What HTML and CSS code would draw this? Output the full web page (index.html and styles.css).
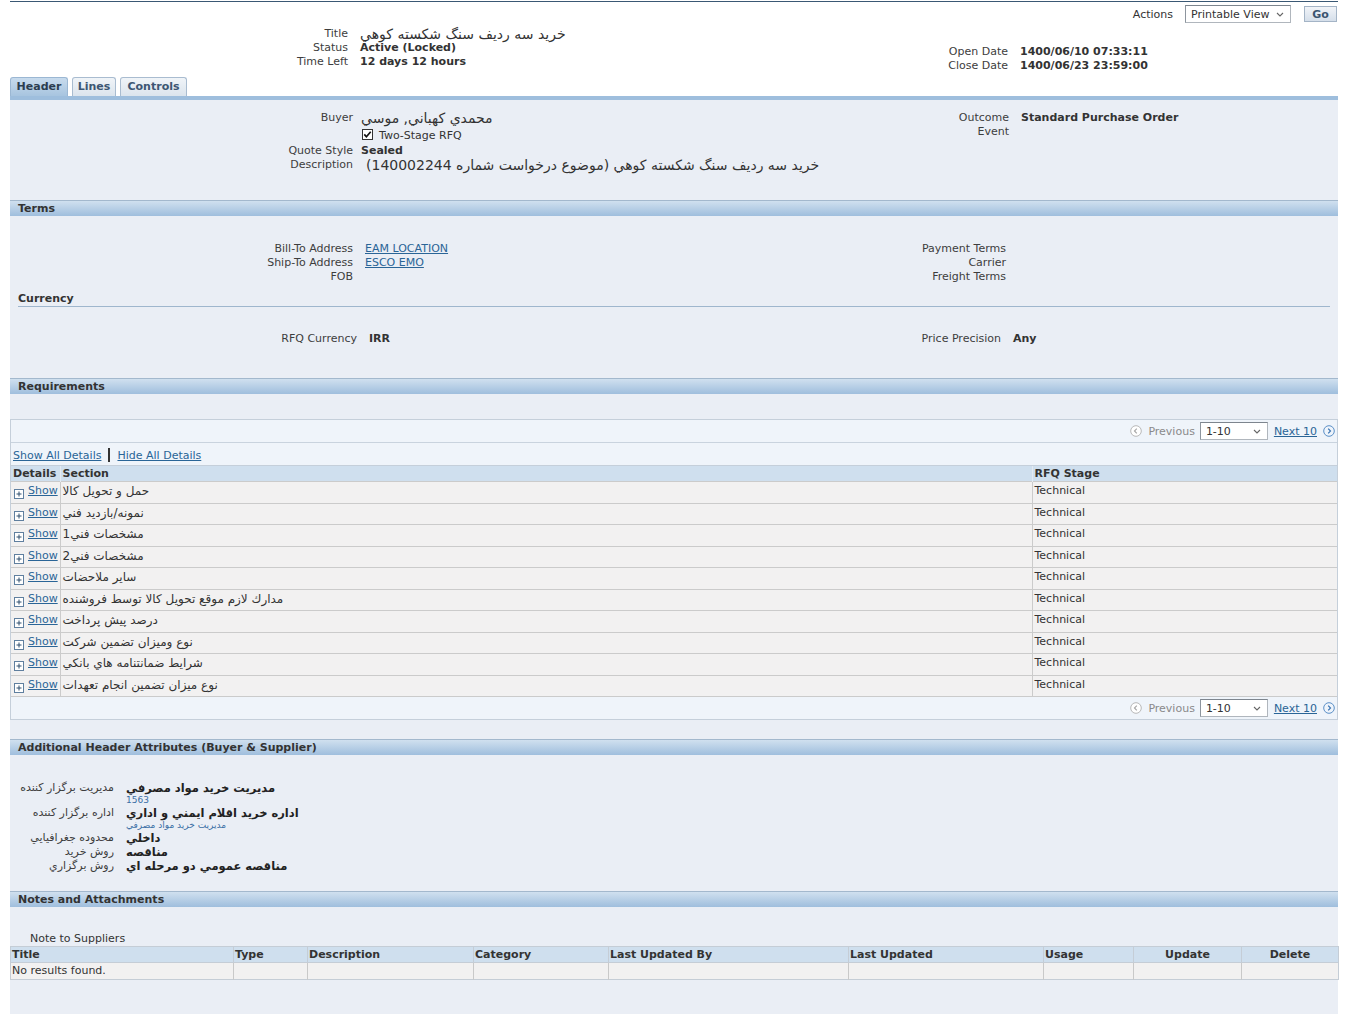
FILE: index.html
```html
<!DOCTYPE html>
<html>
<head>
<meta charset="utf-8">
<title>RFQ</title>
<link rel="stylesheet" href="styles.css">
</head>
<body>
<div class="page">
  <div class="actions">
    <span class="lbl">Actions</span>
    <span class="select act-select">Printable View<svg class="chev" width="8" height="5" viewBox="0 0 8 5"><path d="M1 1 L4 4 L7 1" fill="none" stroke="#666" stroke-width="1.1"/></svg></span>
    <span class="gobtn">Go</span>
  </div>

  <div class="summary">
    <div class="kv kv-title">
      <span class="k">Title</span><span class="v fa">خريد سه رديف سنگ شكسته كوهي</span>
      <span class="k">Status</span><span class="v b">Active (Locked)</span>
      <span class="k">Time Left</span><span class="v b">12 days 12 hours</span>
    </div>
    <div class="kv kv-dates">
      <span class="k">Open Date</span><span class="v b">1400/06/10 07:33:11</span>
      <span class="k">Close Date</span><span class="v b">1400/06/23 23:59:00</span>
    </div>
  </div>

  <div class="tabs">
    <span class="tab active tab-header">Header</span>
    <span class="tab tab-lines">Lines</span>
    <span class="tab tab-controls">Controls</span>
  </div>
  <div class="tabbar"></div>

  <div class="panel">
    <div class="sect sect-header">
      <div class="kv kv-h1">
        <span class="k">Buyer</span><span class="v fa">محمدي كهباني, موسي</span>
        <span class="k cbrow"></span><span class="v cbrow"><svg class="cb" width="11" height="11" viewBox="0 0 11 11"><rect x="0.5" y="0.5" width="10" height="10" fill="#fff" stroke="#333"/><path d="M2.3 5.4 L4.4 7.8 L8.7 2.8" fill="none" stroke="#111" stroke-width="1.7"/></svg>Two-Stage RFQ</span>
        <span class="k">Quote Style</span><span class="v b">Sealed</span>
        <span class="k">Description</span><span class="v fa desc"><span class="rtl" dir="rtl">خريد سه رديف سنگ شكسته كوهي (موضوع درخواست شماره 140002244)</span></span>
      </div>
      <div class="kv kv-h2">
        <span class="k">Outcome</span><span class="v b">Standard Purchase Order</span>
        <span class="k">Event</span><span class="v"></span>
      </div>
    </div>

    <div class="sechead">Terms</div>
    <div class="sect sect-terms">
      <div class="kv kv-t1">
        <span class="k">Bill-To Address</span><span class="v"><a href="#">EAM LOCATION</a></span>
        <span class="k">Ship-To Address</span><span class="v"><a href="#">ESCO EMO</a></span>
        <span class="k">FOB</span><span class="v"></span>
      </div>
      <div class="kv kv-t2">
        <span class="k">Payment Terms</span><span class="v"></span>
        <span class="k">Carrier</span><span class="v"></span>
        <span class="k">Freight Terms</span><span class="v"></span>
      </div>
    </div>
    <div class="subhead">Currency</div>
    <div class="sect sect-cur">
      <div class="kv kv-c1">
        <span class="k">RFQ Currency</span><span class="v b">IRR</span>
      </div>
      <div class="kv kv-c2">
        <span class="k">Price Precision</span><span class="v b">Any</span>
      </div>
    </div>

    <div class="sechead">Requirements</div>
    <div class="reqwrap">
      <div class="navrow">
        <svg class="navicon" width="12" height="12" viewBox="0 0 12 12"><circle cx="6" cy="6" r="5.3" fill="#fff" stroke="#b8b8b8"/><path d="M6.8 3.6 L4.5 6 L6.8 8.4" fill="none" stroke="#a8a8a8" stroke-width="1.2"/></svg>
        <span class="prev">Previous</span>
        <span class="select nav-select">1-10<svg class="chev" width="8" height="5" viewBox="0 0 8 5"><path d="M1 1 L4 4 L7 1" fill="none" stroke="#666" stroke-width="1.1"/></svg></span>
        <a href="#" class="next">Next 10</a>
        <svg class="navicon" width="12" height="12" viewBox="0 0 12 12"><circle cx="6" cy="6" r="5.3" fill="#eef4fb" stroke="#5b8fc6"/><path d="M5.2 3.6 L7.5 6 L5.2 8.4" fill="none" stroke="#3a74b3" stroke-width="1.2"/></svg>
      </div>
      <div class="showall"><a href="#">Show All Details</a><span class="sep"></span><a href="#">Hide All Details</a></div>
      <table class="reqtable">
        <colgroup><col class="c-det"><col class="c-sec"><col class="c-stage"></colgroup>
        <thead><tr><th>Details</th><th>Section</th><th>RFQ Stage</th></tr></thead>
        <tbody>
          <tr><td class="det"><svg class="plus" width="10" height="10" viewBox="0 0 10 10"><rect x="0.5" y="0.5" width="9" height="9" fill="#fff" stroke="#5f7f9f"/><path d="M2.5 5 H7.5 M5 2.5 V7.5" stroke="#2f4f6f" stroke-width="1"/></svg><a href="#">Show</a></td><td class="fa-r">حمل و تحويل كالا</td><td>Technical</td></tr>
          <tr><td class="det"><svg class="plus" width="10" height="10" viewBox="0 0 10 10"><rect x="0.5" y="0.5" width="9" height="9" fill="#fff" stroke="#5f7f9f"/><path d="M2.5 5 H7.5 M5 2.5 V7.5" stroke="#2f4f6f" stroke-width="1"/></svg><a href="#">Show</a></td><td class="fa-r">نمونه/بازديد فني</td><td>Technical</td></tr>
          <tr><td class="det"><svg class="plus" width="10" height="10" viewBox="0 0 10 10"><rect x="0.5" y="0.5" width="9" height="9" fill="#fff" stroke="#5f7f9f"/><path d="M2.5 5 H7.5 M5 2.5 V7.5" stroke="#2f4f6f" stroke-width="1"/></svg><a href="#">Show</a></td><td class="fa-r">مشخصات فني1</td><td>Technical</td></tr>
          <tr><td class="det"><svg class="plus" width="10" height="10" viewBox="0 0 10 10"><rect x="0.5" y="0.5" width="9" height="9" fill="#fff" stroke="#5f7f9f"/><path d="M2.5 5 H7.5 M5 2.5 V7.5" stroke="#2f4f6f" stroke-width="1"/></svg><a href="#">Show</a></td><td class="fa-r">مشخصات فني2</td><td>Technical</td></tr>
          <tr><td class="det"><svg class="plus" width="10" height="10" viewBox="0 0 10 10"><rect x="0.5" y="0.5" width="9" height="9" fill="#fff" stroke="#5f7f9f"/><path d="M2.5 5 H7.5 M5 2.5 V7.5" stroke="#2f4f6f" stroke-width="1"/></svg><a href="#">Show</a></td><td class="fa-r">ساير ملاحضات</td><td>Technical</td></tr>
          <tr><td class="det"><svg class="plus" width="10" height="10" viewBox="0 0 10 10"><rect x="0.5" y="0.5" width="9" height="9" fill="#fff" stroke="#5f7f9f"/><path d="M2.5 5 H7.5 M5 2.5 V7.5" stroke="#2f4f6f" stroke-width="1"/></svg><a href="#">Show</a></td><td class="fa-r">مدارك لازم موقع تحويل كالا توسط فروشنده</td><td>Technical</td></tr>
          <tr><td class="det"><svg class="plus" width="10" height="10" viewBox="0 0 10 10"><rect x="0.5" y="0.5" width="9" height="9" fill="#fff" stroke="#5f7f9f"/><path d="M2.5 5 H7.5 M5 2.5 V7.5" stroke="#2f4f6f" stroke-width="1"/></svg><a href="#">Show</a></td><td class="fa-r">درصد پيش پرداخت</td><td>Technical</td></tr>
          <tr><td class="det"><svg class="plus" width="10" height="10" viewBox="0 0 10 10"><rect x="0.5" y="0.5" width="9" height="9" fill="#fff" stroke="#5f7f9f"/><path d="M2.5 5 H7.5 M5 2.5 V7.5" stroke="#2f4f6f" stroke-width="1"/></svg><a href="#">Show</a></td><td class="fa-r">نوع وميزان تضمين شركت</td><td>Technical</td></tr>
          <tr><td class="det"><svg class="plus" width="10" height="10" viewBox="0 0 10 10"><rect x="0.5" y="0.5" width="9" height="9" fill="#fff" stroke="#5f7f9f"/><path d="M2.5 5 H7.5 M5 2.5 V7.5" stroke="#2f4f6f" stroke-width="1"/></svg><a href="#">Show</a></td><td class="fa-r">شرايط ضمانتنامه هاي بانكي</td><td>Technical</td></tr>
          <tr><td class="det"><svg class="plus" width="10" height="10" viewBox="0 0 10 10"><rect x="0.5" y="0.5" width="9" height="9" fill="#fff" stroke="#5f7f9f"/><path d="M2.5 5 H7.5 M5 2.5 V7.5" stroke="#2f4f6f" stroke-width="1"/></svg><a href="#">Show</a></td><td class="fa-r">نوع ميزان تضمين انجام تعهدات</td><td>Technical</td></tr>
        </tbody>
      </table>
      <div class="navrow navbottom">
        <svg class="navicon" width="12" height="12" viewBox="0 0 12 12"><circle cx="6" cy="6" r="5.3" fill="#fff" stroke="#b8b8b8"/><path d="M6.8 3.6 L4.5 6 L6.8 8.4" fill="none" stroke="#a8a8a8" stroke-width="1.2"/></svg>
        <span class="prev">Previous</span>
        <span class="select nav-select">1-10<svg class="chev" width="8" height="5" viewBox="0 0 8 5"><path d="M1 1 L4 4 L7 1" fill="none" stroke="#666" stroke-width="1.1"/></svg></span>
        <a href="#" class="next">Next 10</a>
        <svg class="navicon" width="12" height="12" viewBox="0 0 12 12"><circle cx="6" cy="6" r="5.3" fill="#eef4fb" stroke="#5b8fc6"/><path d="M5.2 3.6 L7.5 6 L5.2 8.4" fill="none" stroke="#3a74b3" stroke-width="1.2"/></svg>
      </div>
    </div>

    <div class="sechead sechead-add">Additional Header Attributes (Buyer &amp; Supplier)</div>
    <div class="attrs">
      <span class="k">مديريت برگزار كننده</span>
      <span class="v"><span class="fa-b">مديريت خريد مواد مصرفي</span><a href="#" class="sub">1563</a></span>
      <span class="k">اداره برگزار كننده</span>
      <span class="v"><span class="fa-b">اداره خريد اقلام ايمني و اداري</span><a href="#" class="sub">مديريت خريد مواد مصرفي</a></span>
      <span class="k">محدوده جغرافيايي</span>
      <span class="v"><span class="fa-b">داخلي</span></span>
      <span class="k">روش خريد</span>
      <span class="v"><span class="fa-b">مناقصه</span></span>
      <span class="k">روش برگزاري</span>
      <span class="v"><span class="fa-b">مناقصه عمومي دو مرحله اي</span></span>
    </div>

    <div class="sechead sechead-notes">Notes and Attachments</div>
    <div class="notes">
      <div class="notelbl">Note to Suppliers</div>
      <table class="notetable">
        <colgroup>
          <col class="n1"><col class="n2"><col class="n3"><col class="n4"><col class="n5"><col class="n6"><col class="n7"><col class="n8"><col class="n9">
        </colgroup>
        <thead><tr><th>Title</th><th>Type</th><th>Description</th><th>Category</th><th>Last Updated By</th><th>Last Updated</th><th>Usage</th><th class="ctr">Update</th><th class="ctr">Delete</th></tr></thead>
        <tbody><tr><td>No results found.</td><td></td><td></td><td></td><td></td><td></td><td></td><td></td><td></td></tr></tbody>
      </table>
    </div>
  </div>
</div>
</body>
</html>
```
FILE: styles.css
```css
* { box-sizing: border-box; }
html, body { margin: 0; padding: 0; }
body {
  font-family: "DejaVu Sans", Tahoma, Verdana, sans-serif;
  font-size: 11px;
  color: #333;
  background: #fff;
  padding-top: 1px;
}
a { color: #2a6597; text-decoration: underline; }

.page {
  margin: 0 10px;
  border-top: 1px solid #3a5874;
}

/* actions row */
.actions {
  height: 25px;
  display: flex;
  justify-content: flex-end;
  align-items: center;
  padding-right: 1px;
  padding-bottom: 1px;
}
.actions .lbl { margin-right: 12px; color: #333; }
.select {
  display: inline-flex;
  align-items: center;
  justify-content: space-between;
  height: 18px;
  border: 1px solid #b0b6bd;
  border-top-color: #7d858e;
  border-left-color: #8d959e;
  background: #fff;
  padding: 0 6px 0 5px;
  color: #333;
  font-size: 11px;
}
.act-select { width: 106px; }
.chev { display: block; }
.gobtn {
  margin-left: 13px;
  width: 33px;
  height: 16px;
  border: 1px solid #a4b4c6;
  background: linear-gradient(#f1f4f8, #d5dfea);
  font-weight: bold;
  color: #3a5470;
  display: flex;
  align-items: center;
  justify-content: center;
}

/* summary */
.summary {
  display: grid;
  grid-template-columns: minmax(0, 1fr) minmax(0, 1fr);
  margin-bottom: 4px;
}
.kv {
  display: grid;
  grid-template-columns: 338px auto;
  column-gap: 12px;
  line-height: 14px;
  align-content: start;
}
.kv .k { text-align: right; color: #3d3d3d; white-space: nowrap; }
.kv .v { white-space: nowrap; color: #333; }
.b { font-weight: bold; }
.fa { font-size: 14px; }
.kv-dates { grid-template-columns: 334px auto; margin-top: 18px; }

/* tabs */
.tabs {
  display: flex;
  gap: 4px;
  height: 19px;
}
.tab {
  height: 19px;
  border: 1px solid #a9bcd0;
  border-bottom: none;
  border-radius: 3px 3px 0 0;
  background: linear-gradient(#f0f4f8, #dbe4ed);
  font-weight: bold;
  color: #3d5673;
  line-height: 18px;
  text-align: center;
}
.tab.active {
  background: linear-gradient(#c8dbed, #a7c4df);
  border-color: #9bb7d3;
  color: #2c3d50;
}
.tab-header { width: 58px; }
.tab-lines { width: 44px; }
.tab-controls { width: 67px; }
.tabbar { height: 4px; background: #9ebedd; }

/* panel */
.panel {
  background: #eaeef5;
  padding-bottom: 40px;
}
.sect {
  display: grid;
  grid-template-columns: minmax(0, 1fr) minmax(0, 1fr);
}
.sect-header { padding: 11px 0 28px; }
.kv-h1 { grid-template-columns: 343px auto; column-gap: 8px; }
.kv-h2 { grid-template-columns: 335px auto; }
.kv .cbrow { height: 19px; padding-top: 4px; }
.cb { vertical-align: -1px; margin: 0 6px 0 1px; }
.kv .desc { padding-left: 5px; }
.rtl { unicode-bidi: isolate; }

.sechead {
  height: 16px;
  border-top: 1px solid #a3b8cd;
  background: linear-gradient(#d0e0ef, #9fbedd);
  padding-left: 8px;
  font-weight: bold;
  line-height: 15px;
  color: #333;
}

.sect-terms { padding-top: 26px; }
.kv-t1 { grid-template-columns: 343px auto; }
.kv-t2 { grid-template-columns: 332px auto; }
.subhead {
  margin: 8px 8px 0;
  height: 15px;
  line-height: 14px;
  font-weight: bold;
  border-bottom: 1px solid #9fb6cd;
}
.sect-cur { padding: 25px 0 32px; }
.kv-c1 { grid-template-columns: 347px auto; }
.kv-c2 { grid-template-columns: 327px auto; }

/* requirements table */
.reqwrap {
  margin-top: 25px;
  border: 1px solid #c5cfda;
  background: #eff4fa;
}
.navrow {
  height: 23px;
  display: flex;
  justify-content: flex-end;
  align-items: center;
  padding-right: 2px;
  border-bottom: 1px solid #c9d3de;
}
.navbottom { border-bottom: none; height: 22px; }
.navicon { display: block; }
.prev { color: #8a8a8a; margin: 0 5px 0 6px; }
.nav-select { width: 68px; }
.next { margin: 0 6px 0 6px; }
.showall {
  height: 22px;
  display: flex;
  align-items: center;
  padding-left: 2px;
  padding-top: 2px;
}
.showall .sep {
  display: inline-block;
  width: 2px;
  height: 14px;
  background: #333;
  margin: 0 7px 0 7px;
}
.reqtable {
  width: 100%;
  border-collapse: collapse;
  table-layout: fixed;
}
.c-det { width: 49px; }
.c-stage { width: 305px; }
.reqtable th {
  background: #cfdfee;
  text-align: left;
  font-weight: bold;
  height: 16px;
  padding: 0 2px;
  line-height: 15px;
  border-top: 1px solid #c5cfda;
  border-left: 1px solid #e4ebf2;
}
.reqtable th:first-child { border-left: none; }
.reqtable td {
  background: #f2f1f1;
  height: 21.5px;
  vertical-align: top;
  padding: 2px 2px 0;
  line-height: 14px;
  border-top: 1px solid #cbcbcb;
  border-left: 1px solid #cbcbcb;
  white-space: nowrap;
  font-size: 11px;
}
.reqtable td.fa-r { font-size: 12px; }
.reqtable td:first-child { border-left: none; }
.reqtable td.det { padding-left: 3px; }
.reqtable tbody tr:last-child td { border-bottom: 1px solid #cbcbcb; }
.plus { vertical-align: -5px; margin-right: 4px; }

/* additional attrs */
.sechead-add { margin-top: 19px; }
.attrs {
  display: grid;
  grid-template-columns: 104px auto;
  column-gap: 12px;
  padding: 26px 0 18px;
  line-height: 14px;
  align-items: start;
}
.attrs .k { text-align: right; white-space: nowrap; color: #3d3d3d; }
.attrs .v { display: flex; flex-direction: column; align-items: flex-start; }
.fa-b { font-weight: bold; font-size: 11.5px; line-height: 14px; color: #222; }
.sub { font-size: 9px; line-height: 11px; text-decoration: none; color: #3a6ea5; }

/* notes */
.notes { padding-top: 25px; }
.notelbl { padding-left: 20px; line-height: 14px; }
.notetable {
  width: 100%;
  border-collapse: collapse;
  table-layout: fixed;
  border: 1px solid #c5cdd6;
}
.n1 { width: 223px; } .n2 { width: 74px; } .n3 { width: 166px; }
.n4 { width: 135px; } .n5 { width: 240px; } .n6 { width: 195px; }
.n7 { width: 90px; } .n8 { width: 108px; } .n9 { width: 97px; }
.notetable th {
  background: #cfdfee;
  text-align: left;
  font-weight: bold;
  height: 16px;
  padding: 0 1px;
  line-height: 15px;
  border-left: 1px solid #c5cdd6;
  border-bottom: 1px solid #c5cdd6;
}
.notetable th.ctr { text-align: center; }
.notetable td {
  background: #f2f1f1;
  height: 17px;
  padding: 0 1px;
  line-height: 16px;
  border-left: 1px solid #c9c9c9;
}
.notetable th:first-child, .notetable td:first-child { border-left: none; }
```
